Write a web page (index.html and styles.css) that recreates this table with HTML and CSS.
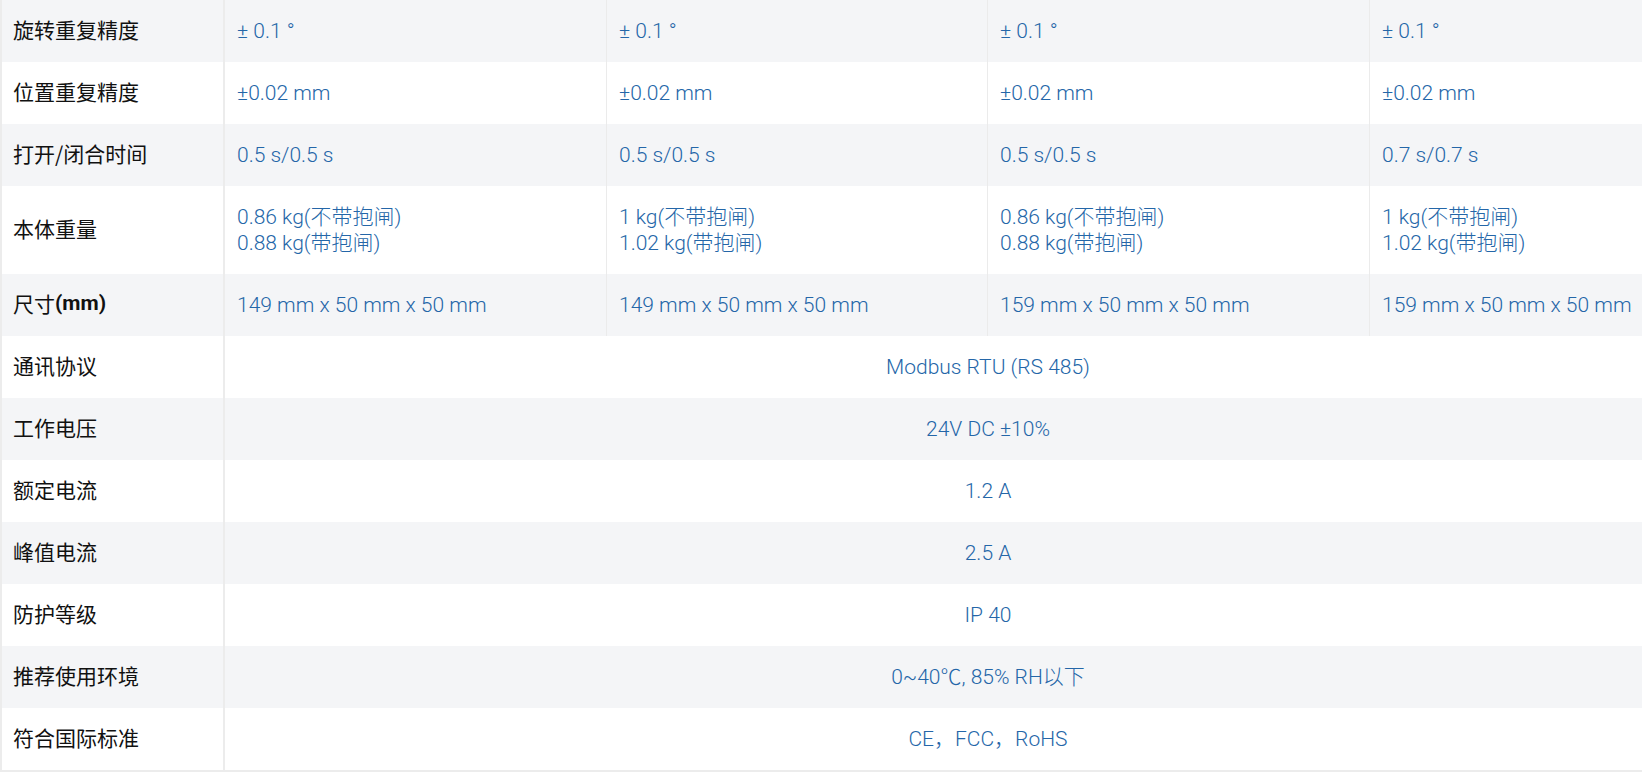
FILE: index.html
```html
<!DOCTYPE html>
<html lang="zh-CN">
<head>
<meta charset="utf-8">
<title>规格参数</title>
<link rel="stylesheet" href="styles.css">
</head>
<body>
<div class="viewport">
  <div class="spec" role="table">
    <div class="row" role="row">
      <div class="label" role="rowheader">旋转重复精度</div>
      <div class="val" role="cell">± 0.1 °</div>
      <div class="val sep" role="cell">± 0.1 °</div>
      <div class="val sep" role="cell">± 0.1 °</div>
      <div class="val sep" role="cell">± 0.1 °</div>
    </div>
    <div class="row" role="row">
      <div class="label" role="rowheader">位置重复精度</div>
      <div class="val" role="cell">±0.02 mm</div>
      <div class="val sep" role="cell">±0.02 mm</div>
      <div class="val sep" role="cell">±0.02 mm</div>
      <div class="val sep" role="cell">±0.02 mm</div>
    </div>
    <div class="row" role="row">
      <div class="label" role="rowheader">打开/闭合时间</div>
      <div class="val" role="cell">0.5 s/0.5 s</div>
      <div class="val sep" role="cell">0.5 s/0.5 s</div>
      <div class="val sep" role="cell">0.5 s/0.5 s</div>
      <div class="val sep" role="cell">0.7 s/0.7 s</div>
    </div>
    <div class="row" role="row">
      <div class="label" role="rowheader">本体重量</div>
      <div class="val" role="cell">0.86 kg(不带抱闸)<br>0.88 kg(带抱闸)</div>
      <div class="val sep" role="cell">1 kg(不带抱闸)<br>1.02 kg(带抱闸)</div>
      <div class="val sep" role="cell">0.86 kg(不带抱闸)<br>0.88 kg(带抱闸)</div>
      <div class="val sep" role="cell">1 kg(不带抱闸)<br>1.02 kg(带抱闸)</div>
    </div>
    <div class="row" role="row">
      <div class="label" role="rowheader">尺寸<b>(mm)</b></div>
      <div class="val" role="cell">149 mm x 50 mm x 50 mm</div>
      <div class="val sep" role="cell">149 mm x 50 mm x 50 mm</div>
      <div class="val sep" role="cell">159 mm x 50 mm x 50 mm</div>
      <div class="val sep" role="cell">159 mm x 50 mm x 50 mm</div>
    </div>
    <div class="row" role="row">
      <div class="label" role="rowheader">通讯协议</div>
      <div class="val span" role="cell">Modbus RTU (RS 485)</div>
    </div>
    <div class="row" role="row">
      <div class="label" role="rowheader">工作电压</div>
      <div class="val span" role="cell">24V DC ±10%</div>
    </div>
    <div class="row" role="row">
      <div class="label" role="rowheader">额定电流</div>
      <div class="val span" role="cell">1.2 A</div>
    </div>
    <div class="row" role="row">
      <div class="label" role="rowheader">峰值电流</div>
      <div class="val span" role="cell">2.5 A</div>
    </div>
    <div class="row" role="row">
      <div class="label" role="rowheader">防护等级</div>
      <div class="val span" role="cell">IP 40</div>
    </div>
    <div class="row" role="row">
      <div class="label" role="rowheader">推荐使用环境</div>
      <div class="val span" role="cell">0~40℃, 85% RH以下</div>
    </div>
    <div class="row" role="row">
      <div class="label" role="rowheader">符合国际标准</div>
      <div class="val span" role="cell">CE，FCC，RoHS</div>
    </div>
  </div>
</div>
</body>
</html>
```
FILE: styles.css
```css
* {
  box-sizing: border-box;
}

html, body {
  margin: 0;
  padding: 0;
  background: #ffffff;
}

body {
  overflow: hidden;
  font-family: Roboto, "Noto Sans CJK SC", sans-serif;
}

.viewport {
  width: 100%;
  overflow: hidden;
}

.spec {
  width: 1753px;
  border-left: 2px solid #ececec;
  border-bottom: 2px solid #ececec;
}

.row {
  display: grid;
  grid-template-columns: 223px 381px 381px 382px 382px;
  background: #ffffff;
}

.row:nth-child(odd) {
  background: #f4f5f7;
}

.label {
  display: flex;
  align-items: center;
  padding: 16px 11px 20px;
  border-right: 2px solid #ececec;
  font-family: "Noto Sans CJK SC", sans-serif;
  font-size: 21px;
  line-height: 26px;
  color: #111111;
}

.label b {
  font-family: Roboto, "Noto Sans CJK SC", sans-serif;
  font-weight: 700;
}

.val {
  padding: 18px 12px;
  font-family: Roboto, "Noto Sans CJK SC", sans-serif;
  font-weight: 300;
  font-size: 21px;
  line-height: 26px;
  color: #2466a8;
  white-space: nowrap;
}

.sep {
  border-left: 1px solid #ebebeb;
}

.span {
  grid-column: 2 / -1;
  text-align: center;
}
```
